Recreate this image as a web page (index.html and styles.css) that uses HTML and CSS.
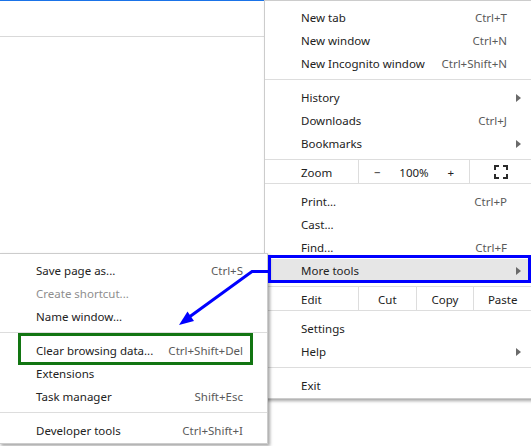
FILE: index.html
```html
<!DOCTYPE html>
<html>
<head>
<meta charset="utf-8">
<link rel="stylesheet" href="styles.css">
</head>
<body>
<div class="page">
  <div class="tabbar"></div>

  <div class="menu main">
    <div class="item"><span>New tab</span><span class="key">Ctrl+T</span></div>
    <div class="item"><span>New window</span><span class="key">Ctrl+N</span></div>
    <div class="item"><span>New Incognito window</span><span class="key">Ctrl+Shift+N</span></div>
    <div class="sep"></div>
    <div class="item"><span>History</span><span class="arrow"></span></div>
    <div class="item"><span>Downloads</span><span class="key">Ctrl+J</span></div>
    <div class="item"><span>Bookmarks</span><span class="arrow"></span></div>
    <div class="row">
      <div class="label">Zoom</div>
      <div class="zoomctl"><span>&minus;</span><span>100%</span><span>+</span></div>
      <div class="fs">
        <svg width="14" height="14" viewBox="0 0 14 14" fill="none" stroke="#2b2b2b" stroke-width="2">
          <path d="M1 5V1h4M9 1h4v4M13 9v4H9M5 13H1V9"/>
        </svg>
      </div>
    </div>
    <div class="item"><span>Print...</span><span class="key">Ctrl+P</span></div>
    <div class="item"><span>Cast...</span></div>
    <div class="item"><span>Find...</span><span class="key">Ctrl+F</span></div>
    <div class="item hover"><span>More tools</span><span class="arrow"></span></div>
    <div class="row">
      <div class="label">Edit</div>
      <div class="btn">Cut</div>
      <div class="btn">Copy</div>
      <div class="btn">Paste</div>
    </div>
    <div class="item"><span>Settings</span></div>
    <div class="item"><span>Help</span><span class="arrow"></span></div>
    <div class="sep"></div>
    <div class="item"><span>Exit</span></div>
  </div>

  <div class="menu sub">
    <div class="item"><span>Save page as...</span><span class="key">Ctrl+S</span></div>
    <div class="item disabled"><span>Create shortcut...</span></div>
    <div class="item"><span>Name window...</span></div>
    <div class="sep"></div>
    <div class="item"><span>Clear browsing data...</span><span class="key">Ctrl+Shift+Del</span></div>
    <div class="item"><span>Extensions</span></div>
    <div class="item"><span>Task manager</span><span class="key">Shift+Esc</span></div>
    <div class="sep"></div>
    <div class="item"><span>Developer tools</span><span class="key">Ctrl+Shift+I</span></div>
  </div>

  <div class="mark blue"></div>
  <div class="mark green"></div>

  <svg class="pointer" width="531" height="446" viewBox="0 0 531 446">
    <polyline points="269,271.5 252,271.5 190,316.5" fill="none" stroke="#0000ff" stroke-width="3" stroke-linejoin="miter"/>
    <polygon points="179,325 194,321 187.5,311.5" fill="#0000ff"/>
  </svg>
</div>
</body>
</html>
```

FILE: styles.css
```css
* { box-sizing: border-box; }

body {
  margin: 0;
  background: #ffffff;
  font-family: "Noto Sans", "Open Sans", sans-serif;
  font-size: 11.5px;
  color: #222222;
}

.page {
  position: relative;
  width: 531px;
  height: 446px;
  overflow: hidden;
  background: #ffffff;
}

.tabbar {
  height: 37px;
  border-top: 1px solid #1a73e8;
  border-bottom: 1px solid #d9d9d9;
}

.menu {
  position: absolute;
  background: #ffffff;
  border: 1px solid #cccccc;
  box-shadow: 2px 2px 3px rgba(0, 0, 0, 0.35);
}

.main {
  left: 264px;
  top: 0;
  width: 268px;
  padding: 5px 0 1px;
}

.sub {
  left: -1px;
  top: 253px;
  width: 269px;
  padding: 5px 0 1px;
}

.item {
  display: flex;
  align-items: center;
  height: 23px;
  padding: 0 24px 0 36px;
  white-space: nowrap;
}

.key {
  margin-left: auto;
  color: #5a5a5a;
}

.disabled {
  color: #8e8e8e;
}

.hover {
  background: #e6e6e6;
}

.arrow {
  margin-left: auto;
  margin-right: -14px;
  width: 0;
  height: 0;
  border-top: 4px solid transparent;
  border-bottom: 4px solid transparent;
  border-left: 5px solid #6a6a6a;
}

.sep {
  height: 1px;
  background: #dddddd;
  margin: 4px 0 6px;
}

.row {
  display: flex;
  height: 25px;
  margin: 4px 0 6px;
  border-top: 1px solid #dddddd;
  border-bottom: 1px solid #dddddd;
}

.label {
  width: 93px;
  padding: 1px 0 0 36px;
  display: flex;
  align-items: center;
}

.zoomctl {
  width: 111px;
  padding-top: 1px;
  border-left: 1px solid #dddddd;
  display: grid;
  grid-template-columns: 1fr 1fr 1fr;
  align-items: center;
  text-align: center;
}

.fs {
  flex: 1;
  border-left: 1px solid #dddddd;
  display: flex;
  align-items: center;
  justify-content: center;
}

.btn {
  flex: 1;
  padding-top: 1px;
  border-left: 1px solid #dddddd;
  display: flex;
  align-items: center;
  justify-content: center;
}

.mark {
  position: absolute;
  border-style: solid;
  border-width: 3px;
}

.mark.blue {
  left: 268px;
  top: 255px;
  width: 263px;
  height: 28px;
  border-color: #0000ff;
}

.mark.green {
  left: 18px;
  top: 333px;
  width: 235px;
  height: 32px;
  border-color: #127512;
}

.pointer {
  position: absolute;
  left: 0;
  top: 0;
}
```
